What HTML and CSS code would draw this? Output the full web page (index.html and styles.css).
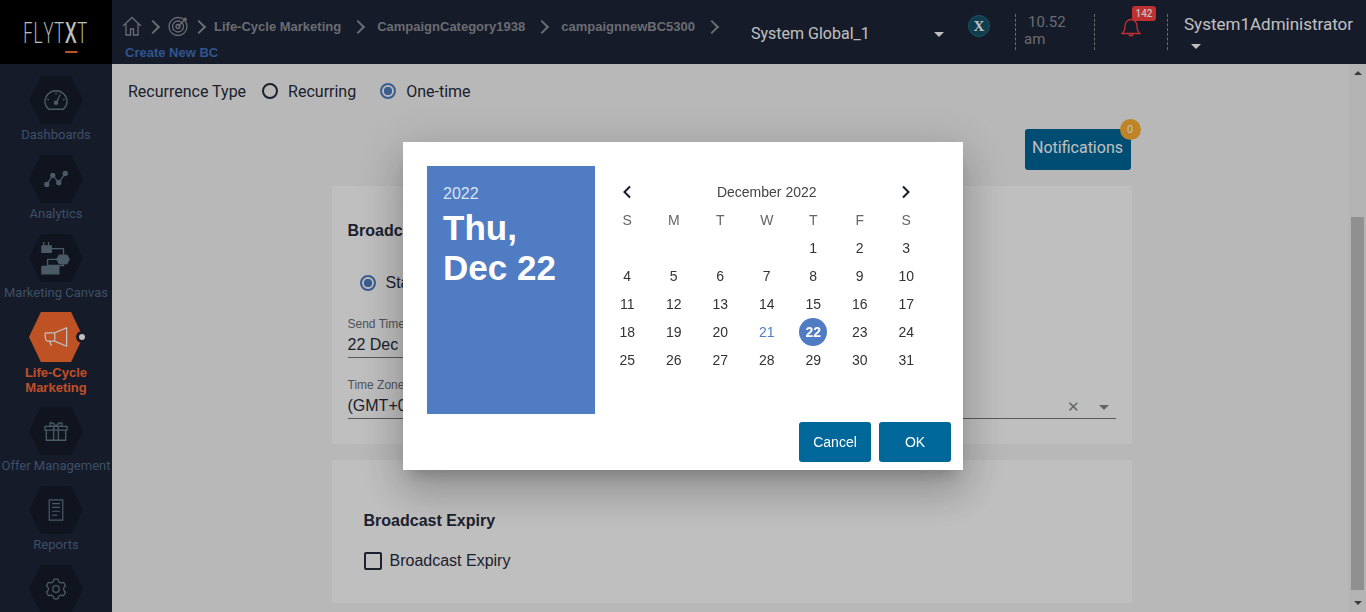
FILE: index.html
```html
<!DOCTYPE html>
<html lang="en">
<head>
    <meta charset="UTF-8">
    <meta name="viewport" content="width=device-width, initial-scale=1.0">
    <title>Create New BC</title>
    <link rel="stylesheet" href="styles.css">
</head>
<body>
    <div class="app">
        <header class="topbar">
            <div class="logo"><span class="logo-text">FLYT<b>X</b>T</span></div>
            <div class="crumbs-block">
                <div class="crumbs">
                    <svg class="crumb-icon" viewBox="0 0 20 20"><path d="M1 10 10 1.5 19 10M4 8v11h4.500v-6h3v6H16V8"/></svg>
                    <span class="sep sep-sm"></span>
                    <svg class="crumb-icon" viewBox="0 0 20 20"><circle cx="10" cy="10.500" r="9"/><circle cx="10" cy="10.500" r="5.500"/><circle cx="10" cy="10.500" r="2"/><path d="M10 10.500 18 2.500M15.500 2.500h2.500v2.500"/></svg>
                    <span class="sep sep-sm"></span>
                    <span class="crumb">Life-Cycle Marketing</span>
                    <span class="sep"></span>
                    <span class="crumb">CampaignCategory1938</span>
                    <span class="sep"></span>
                    <span class="crumb">campaignnewBC5300</span>
                    <span class="sep"></span>
                </div>
                <div class="crumb-link">Create New BC</div>
            </div>
            <div class="org-select">
                <span>System Global_1</span>
                <span class="caret"></span>
            </div>
            <div class="x-wrap"><span class="x-badge">X</span></div>
            <div class="time-block">
                <div class="time-h">10.52</div>
                <div>am</div>
            </div>
            <div class="bell-block">
                <svg class="bell" viewBox="0 0 20 20"><path d="M1 16.500c2-1.500 3-3 3-7.500 0-3.500 2.500-6.500 6-6.500s6 3 6 6.500c0 4.500 1 6 3 7.500zM8.500 16.500v2h3v-2"/></svg>
                <span class="bell-count">142</span>
            </div>
            <div class="user-block">
                <div>System1Administrator</div>
                <span class="caret user-caret"></span>
            </div>
        </header>

        <div class="content">
            <nav class="sidebar">
                <div class="nav-item">
                    <div class="hex"><svg viewBox="0 0 26 22"><path d="M5 21h16c2-2 4-4 4-8A12 12 0 0 0 1 13c0 4 2 6 4 8zM3.500 10l2 1M13 3v2M22.500 10l-2 1M17.500 5l-4 9"/><circle cx="13" cy="14" r="1.800" class="fill"/></svg></div>
                    <div class="nav-label">Dashboards</div>
                </div>
                <div class="nav-item">
                    <div class="hex"><svg viewBox="0 0 26 22"><path d="M3 17 9.500 7 16 15 23 5"/><circle cx="3" cy="17" r="2.200" class="fill"/><circle cx="9.500" cy="7" r="2.200" class="fill"/><circle cx="16" cy="15" r="2.200" class="fill"/><circle cx="23" cy="5" r="2.200" class="fill"/></svg></div>
                    <div class="nav-label">Analytics</div>
                </div>
                <div class="nav-item">
                    <div class="hex hex-wide"><svg viewBox="0 0 32 36"><rect x="1" y="5" width="10" height="7" class="fill"/><path d="M3 1v4M8 1v4M11 8h13v8M24 23v3H7v4"/><path d="M19.500 15h8l2.500 4.500-2.500 4.500h-8L17 19.500z" class="fill"/><path d="M17 19.500H7v7"/><rect x="1" y="27" width="18" height="8" class="fill"/></svg></div>
                    <div class="nav-label">Marketing Canvas</div>
                </div>
                <div class="nav-item active">
                    <div class="hex-wrap">
                        <div class="hex"><svg viewBox="0 0 26 22"><path d="M1.500 6.500h9.500c1-.3 1 8.500 0 9H3.500C1 15 1 7 1.500 6.500zM11.500 6.500 24.500 1v20l-13-5.500M6 15.500 8 20.500"/></svg></div>
                        <span class="active-dot"></span>
                    </div>
                    <div class="nav-label">Life-Cycle<br>Marketing</div>
                </div>
                <div class="nav-item">
                    <div class="hex"><svg viewBox="0 0 26 22"><path d="M1 6h24v4H1zM2.500 10v11h21V10M10.500 6v15M15.500 6v15M13 6C10 1 5 1 6.500 4.500 7 5.500 9 6 13 6c4 0 6-.5 6.500-1.500C21 1 16 1 13 6z"/></svg></div>
                    <div class="nav-label">Offer Management</div>
                </div>
                <div class="nav-item">
                    <div class="hex"><svg viewBox="0 0 26 26"><path d="M5 1h16v24H5zM8.500 5.500h9M8.500 10h9M8.500 14.500h9M8.500 19h6"/></svg></div>
                    <div class="nav-label">Reports</div>
                </div>
                <div class="nav-item">
                    <div class="hex"><svg viewBox="0 0 24 24"><polygon points="8.820,4.120 9.900,1.200 14.100,1.200 15.180,4.120 17.230,5.310 20.300,4.780 22.400,8.420 20.410,10.810 20.410,13.190 22.400,15.580 20.300,19.220 17.230,18.690 15.180,19.880 14.100,22.800 9.900,22.800 8.820,19.880 6.770,18.690 3.700,19.220 1.600,15.580 3.590,13.190 3.590,10.810 1.600,8.420 3.700,4.780 6.770,5.310"/><circle cx="12" cy="12" r="3.600"/></svg></div>
                    <div class="nav-label">Settings</div>
                </div>
            </nav>

            <main class="main">
                <div class="recurrence">
                    <span class="rec-title">Recurrence Type</span>
                    <span class="radio"></span><span class="rec-opt">Recurring</span>
                    <span class="radio checked"></span><span class="rec-opt">One-time</span>
                </div>
                <div class="wrap">
                    <div class="notif-row">
                        <button class="notif-btn">Notifications<span class="notif-count">0</span></button>
                    </div>
                    <section class="card schedule">
                        <h3 class="card-title">Broadcast Schedule</h3>
                        <div class="send-type"><span class="radio checked"></span><span>Standard</span></div>
                        <label class="field-label">Send Time</label>
                        <div class="field field-short">22 Dec 2022 10:52</div>
                        <label class="field-label zone-label">Time Zone</label>
                        <div class="field">
                            <span>(GMT+05:30) India Standard Time</span>
                            <span class="field-tools"><span class="clear">✕</span><span class="caret"></span></span>
                        </div>
                    </section>
                    <section class="card expiry">
                        <h3 class="card-title">Broadcast Expiry</h3>
                        <div class="check-row"><span class="checkbox"></span><span>Broadcast Expiry</span></div>
                    </section>
                </div>
            </main>

            <div class="scrollbar">
                <span class="arrow-up"></span>
                <div class="thumb"></div>
                <span class="arrow-down"></span>
            </div>
        </div>
    </div>

    <div class="backdrop">
        <div class="dialog">
            <div class="dialog-top">
                <div class="date-panel">
                    <div class="date-year">2022</div>
                    <div class="date-big">Thu, Dec 22</div>
                </div>
                <div class="calendar">
                    <span class="cal-nav"><svg viewBox="0 0 10 14"><path d="M8 1.500 2.500 7 8 12.500"/></svg></span>
                    <span class="cal-month">December 2022</span>
                    <span class="cal-nav"><svg viewBox="0 0 10 14"><path d="M2 1.500 7.500 7 2 12.500"/></svg></span>
                    <span class="wd">S</span><span class="wd">M</span><span class="wd">T</span><span class="wd">W</span><span class="wd">T</span><span class="wd">F</span><span class="wd">S</span>
                    <span class="day first">1</span><span class="day">2</span><span class="day">3</span>
                    <span class="day">4</span><span class="day">5</span><span class="day">6</span><span class="day">7</span><span class="day">8</span><span class="day">9</span><span class="day">10</span>
                    <span class="day">11</span><span class="day">12</span><span class="day">13</span><span class="day">14</span><span class="day">15</span><span class="day">16</span><span class="day">17</span>
                    <span class="day">18</span><span class="day">19</span><span class="day">20</span><span class="day today">21</span><span class="day"><span class="selected">22</span></span><span class="day">23</span><span class="day">24</span>
                    <span class="day">25</span><span class="day">26</span><span class="day">27</span><span class="day">28</span><span class="day">29</span><span class="day">30</span><span class="day">31</span>
                </div>
            </div>
            <div class="dialog-actions">
                <button class="dlg-btn">Cancel</button>
                <button class="dlg-btn">OK</button>
            </div>
        </div>
    </div>
</body>
</html>
```

FILE: styles.css
```css
* {
    box-sizing: border-box;
}
html, body {
    height: 100%;
}
body {
    margin: 0;
    font-family: Roboto, "Liberation Sans", sans-serif;
    background-color: #f6f6f6;
    color: #272c3c;
    overflow: hidden;
}
.app {
    height: 100vh;
    display: flex;
    flex-direction: column;
}

/* top bar */
.topbar {
    height: 64px;
    flex: none;
    display: flex;
    align-items: center;
    background-color: #1d2437;
    color: #fff;
}
.logo {
    width: 112px;
    height: 64px;
    background: #000;
    display: flex;
    align-items: center;
    justify-content: center;
}
.logo-text {
    font-family: "Open Sans", sans-serif;
    font-weight: 300;
    font-size: 29px;
    line-height: 30px;
    letter-spacing: 2px;
    color: #fff;
    display: inline-block;
    transform: scaleX(.62);
    white-space: nowrap;
}
.logo-text b {
    font-weight: 600;
    border-bottom: 2px solid #ff6e31;
}
.crumbs-block {
    width: 639px;
    height: 64px;
    padding: 14px 0 0 10px;
}
.crumbs {
    display: flex;
    align-items: center;
    height: 24px;
    font-family: "Liberation Sans", sans-serif;
    font-size: 13px;
    font-weight: bold;
    color: #8e9198;
}
.crumb-icon {
    width: 20px;
    height: 20px;
    fill: none;
    stroke: #8e9198;
    stroke-width: 1.300;
}
.sep {
    width: 8px;
    height: 12px;
    margin: 0 14px;
    flex: none;
    position: relative;
}
.sep::before {
    content: "";
    display: block;
    width: 8px;
    height: 8px;
    margin: 2px 0 0 -2px;
    border-top: 2px solid #8e9198;
    border-right: 2px solid #8e9198;
    transform: rotate(45deg);
}
.sep-sm {
    margin: 0 10px 0 8px;
}
.crumb-link {
    margin: 7px 0 0 3px;
    font-family: "Liberation Sans", sans-serif;
    font-size: 13px;
    font-weight: bold;
    line-height: 16px;
    color: #3f72bf;
}
.caret {
    display: inline-block;
    width: 0;
    height: 0;
    border-left: 5px solid transparent;
    border-right: 5px solid transparent;
    border-top: 5px solid #fff;
}
.org-select {
    width: 217px;
    padding: 2px 24px 0 0;
    display: flex;
    align-items: center;
    justify-content: space-between;
    font-size: 16px;
}
.org-select .caret {
    margin-top: 3px;
}
.x-wrap {
    width: 47px;
    padding-bottom: 12px;
}
.x-badge {
    width: 22px;
    height: 22px;
    border-radius: 50%;
    background: #14506a;
    border: 1px solid #2a6d88;
    display: flex;
    align-items: center;
    justify-content: center;
    font-family: "Liberation Serif", serif;
    font-size: 15px;
    font-weight: bold;
    line-height: 14px;
    color: #fff;
}
.time-block, .bell-block, .user-block {
    height: 36px;
    border-left: 1px dashed #8e9198;
}
.time-block {
    width: 79px;
    padding-left: 8px;
    font-size: 15px;
    line-height: 17px;
    color: #8e9198;
}
.time-h {
    padding-left: 4px;
}
.bell-block {
    width: 73px;
    position: relative;
}
.bell {
    position: absolute;
    left: 26px;
    top: 3px;
    width: 20px;
    height: 20px;
    fill: none;
    stroke: #ff4040;
    stroke-width: 1.300;
}
.bell-count {
    position: absolute;
    left: 37px;
    top: -8px;
    width: 24px;
    height: 15px;
    border-radius: 3px;
    background: #ff4040;
    color: #fff;
    font-size: 10px;
    font-weight: 500;
    line-height: 15px;
    text-align: center;
}
.user-block {
    padding-left: 16px;
    font-size: 17px;
    line-height: 20px;
    margin-top: 0;
    position: relative;
    flex: 1;
    white-space: nowrap;
}
.user-caret {
    position: absolute;
    left: 23px;
    top: 30px;
}

.content {
    flex: 1;
    min-height: 0;
    display: flex;
}

/* left nav */
.sidebar {
    width: 112px;
    flex: none;
    padding-top: 12px;
    background-color: #1d2437;
    overflow: hidden;
}
.nav-item {
    margin-bottom: 12px;
    text-align: center;
}
.hex {
    width: 54px;
    height: 48px;
    margin: 0 auto;
    background: #151b29;
    clip-path: polygon(22% 0, 78% 0, 100% 50%, 78% 100%, 22% 100%, 0 50%);
    display: flex;
    align-items: center;
    justify-content: center;
}
.hex svg {
    width: 24px;
    height: 22px;
    fill: none;
    stroke: #637a87;
    stroke-width: 1.400;
    stroke-linejoin: round;
}
.hex-wide svg {
    width: 30px;
    height: 34px;
}
.hex svg .fill {
    fill: #637a87;
}
.nav-label {
    margin-top: 3px;
    font-size: 13px;
    line-height: 16px;
    color: #516a88;
    white-space: nowrap;
}
.active .hex-wrap {
    position: relative;
    width: 54px;
    margin: -1px auto 0;
}
.active .hex {
    height: 50px;
    background: #ff6e31;
}
.active .hex svg {
    stroke: #fff;
}
.active-dot {
    position: absolute;
    right: -5px;
    top: 19px;
    width: 12px;
    height: 12px;
    border-radius: 50%;
    background: #fff;
    border: 3px solid #1d2437;
}
.active .nav-label {
    font-family: "Liberation Sans", sans-serif;
    font-weight: bold;
    line-height: 15px;
    color: #ff6a38;
}

/* main area */
.main {
    flex: 1;
    min-width: 0;
    overflow: hidden;
}
.recurrence {
    display: flex;
    align-items: center;
    height: 22px;
    margin: 16px 0 0 16px;
    font-size: 16px;
}
.rec-title {
    margin-right: 16px;
}
.rec-opt {
    margin: 0 24px 0 10px;
}
.radio {
    width: 16px;
    height: 16px;
    flex: none;
    border: 2px solid #272c3c;
    border-radius: 50%;
    display: inline-block;
}
.radio.checked {
    border-color: #4f7cc3;
    background: radial-gradient(circle, #4f7cc3 0 4px, transparent 4.500px);
}
.wrap {
    width: 800px;
    margin: 0 auto;
    padding-left: 1px;
}
.notif-row {
    display: flex;
    justify-content: flex-end;
    margin-top: 27px;
}
.notif-btn {
    position: relative;
    width: 106px;
    height: 41px;
    padding: 0 0 4px;
    border: 0;
    border-radius: 3px;
    background: #00679b;
    color: #fff;
    font-family: Roboto, sans-serif;
    font-size: 16px;
}
.notif-count {
    position: absolute;
    right: -10px;
    top: -10px;
    width: 21px;
    height: 21px;
    border-radius: 50%;
    background: #ffb032;
    font-size: 11px;
    line-height: 21px;
    text-align: center;
}
.card {
    background: #fff;
    margin-top: 16px;
    border-radius: 2px;
    width: 800px;
    font-family: "Liberation Sans", sans-serif;
    font-size: 16px;
}
.card-title {
    margin: 0;
    font-size: 16px;
    line-height: 20px;
}
.schedule {
    height: 258px;
    padding: 35px 16px 0;
}
.send-type {
    display: flex;
    align-items: center;
    gap: 10px;
    height: 20px;
    margin: 32px 0 0 12px;
}
.field-label {
    display: block;
    margin-top: 24px;
    font-size: 12px;
    line-height: 14px;
    color: #6b6f78;
}
.zone-label {
    margin-top: 20px;
}
.field {
    height: 27px;
    padding-top: 4px;
    border-bottom: 1px solid #777;
    line-height: 20px;
    display: flex;
    justify-content: space-between;
}
.field-short {
    width: 400px;
}
.field-tools {
    display: flex;
    align-items: center;
    gap: 19px;
    padding-right: 7px;
    color: #888;
}
.clear {
    font-size: 15px;
}
.field-tools .caret {
    border-top-color: #888;
}
.expiry {
    height: 143px;
    padding: 51px 32px 0;
}
.check-row {
    display: flex;
    align-items: center;
    gap: 8px;
    height: 20px;
    margin-top: 20px;
}
.checkbox {
    width: 18px;
    height: 18px;
    border: 2px solid #272c3c;
    border-radius: 2px;
}
.scrollbar {
    width: 17px;
    flex: none;
    display: flex;
    flex-direction: column;
    align-items: center;
    background: #f0f0f0;
    position: relative;
}
.arrow-up, .arrow-down {
    width: 0;
    height: 0;
    border-left: 4px solid transparent;
    border-right: 4px solid transparent;
}
.arrow-up {
    margin-top: 7px;
    border-bottom: 4px solid #505050;
}
.arrow-down {
    margin-top: 11px;
    border-top: 4px solid #505050;
}
.thumb {
    width: 13px;
    height: 373px;
    margin-top: 142px;
    background: #c1c1c1;
}

/* date dialog */
.backdrop {
    position: fixed;
    inset: 0;
    background: rgba(0, 0, 0, .25);
    display: flex;
    align-items: center;
    justify-content: center;
}
.dialog {
    width: 560px;
    height: 328px;
    padding: 24px 12px 8px 24px;
    background: #fff;
    font-family: "Liberation Sans", sans-serif;
    box-shadow: 0 11px 15px -7px rgba(0, 0, 0, .2), 0 24px 38px 3px rgba(0, 0, 0, .14), 0 9px 46px 8px rgba(0, 0, 0, .12);
}
.dialog-top {
    display: flex;
    height: 248px;
}
.date-panel {
    width: 168px;
    padding: 18px 16px 0;
    background: #4f7cc3;
    color: #fff;
}
.date-year {
    font-size: 16px;
    line-height: 20px;
    color: rgba(255, 255, 255, .8);
}
.date-big {
    margin-top: 4px;
    font-size: 35px;
    font-weight: bold;
    line-height: 40px;
}
.calendar {
    width: 325.500px;
    margin: 12px 0 0 9px;
    display: grid;
    grid-template-columns: repeat(7, 46.500px);
    grid-auto-rows: 28px;
    align-items: center;
    justify-items: center;
    font-size: 14px;
}
.cal-month {
    grid-column: span 5;
    color: #444;
    font-size: 14px;
}
.cal-nav svg {
    display: block;
    width: 10px;
    height: 14px;
    fill: none;
    stroke: #161b29;
    stroke-width: 2;
}
.wd {
    color: #666;
}
.day {
    color: #333;
}
.first {
    grid-column-start: 5;
}
.today {
    color: #4f7cc3;
}
.selected {
    display: block;
    width: 28px;
    height: 28px;
    border-radius: 50%;
    background: #4f7cc3;
    color: #fff;
    font-weight: bold;
    line-height: 28px;
    text-align: center;
}
.dialog-actions {
    display: flex;
    justify-content: flex-end;
    gap: 8px;
    margin-top: 8px;
}
.dlg-btn {
    width: 72px;
    height: 40px;
    border: 0;
    border-radius: 3px;
    background: #00679b;
    color: #fff;
    font-family: "Liberation Sans", sans-serif;
    font-size: 14px;
}
```
